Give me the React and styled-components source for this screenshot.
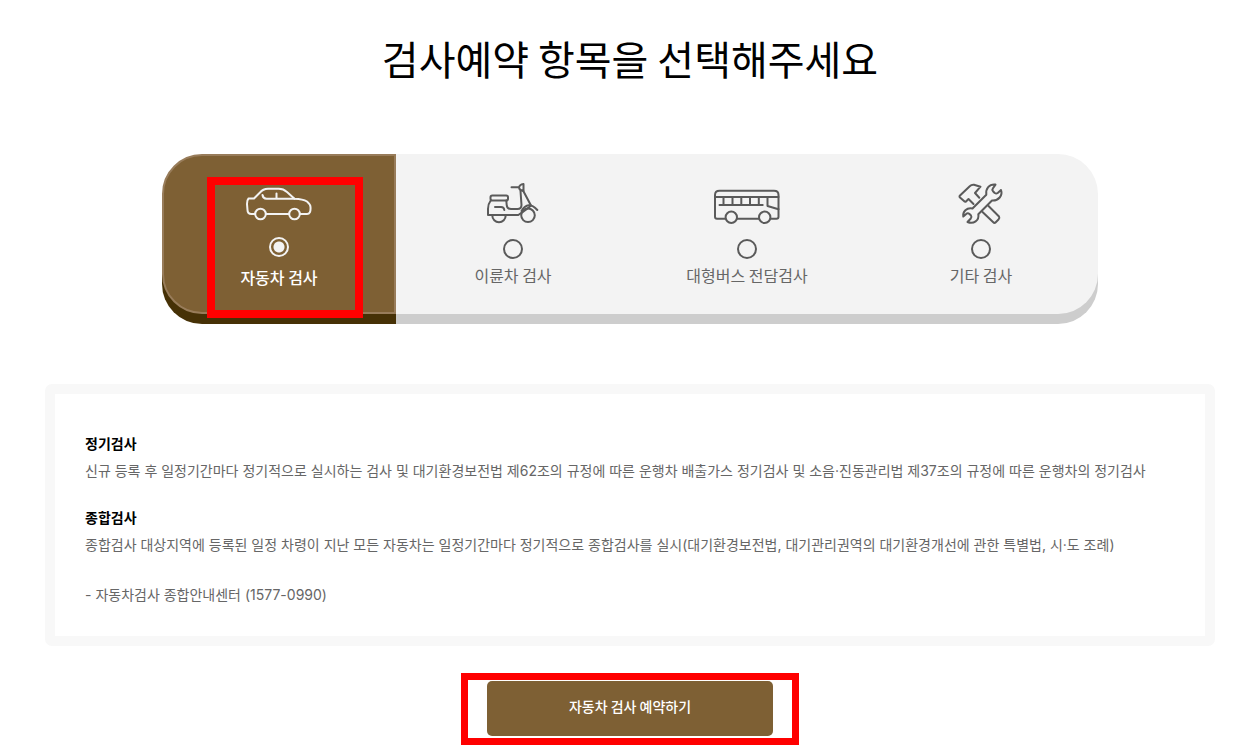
import React, { useState } from "react";
import styled, { createGlobalStyle, css } from "styled-components";

const GlobalStyle = createGlobalStyle`
  *, *::before, *::after { box-sizing: border-box; }
  body {
    margin: 0;
    background: #fff;
    color: #000;
    font-family: "Noto Sans CJK KR", "Noto Sans", sans-serif;
  }
`;

const Page = styled.main`
  padding: 28px 36px 17px 45px;
`;

const Title = styled.h1`
  margin: 0 0 66px;
  font-size: 40px;
  line-height: 60px;
  font-weight: 400;
  text-align: center;
`;

const Tabs = styled.div`
  display: grid;
  grid-template-columns: repeat(4, 1fr);
  width: 80%;
  margin: 0 auto 70px;
`;

const Tab = styled.label`
  position: relative;
  display: flex;
  flex-direction: column;
  align-items: center;
  gap: ${(p) => (p.$active ? 8 : 4)}px;
  height: 160px;
  padding-top: ${(p) => (p.$active ? 22 : 26)}px;
  background: ${(p) => (p.$active ? "#7e6034" : "#f3f3f3")};
  color: ${(p) => (p.$active ? "#fff" : "#666")};
  box-shadow: 0 10px 0 ${(p) => (p.$active ? "#463106" : "#cdcdcd")};
  font-size: 16px;
  font-weight: ${(p) => (p.$active ? 500 : 400)};
  line-height: 24px;
  cursor: pointer;
  ${(p) => p.$active && css`border: 2px solid #987c5a;`}
  &:first-child { border-radius: 40px 0 0 40px; }
  &:last-child { border-radius: 0 40px 40px 0; }
`;

const TabMark = styled.span`
  display: flex;
  flex-direction: column;
  align-items: center;
  gap: 11px;
`;

const Icon = styled.svg`
  display: block;
  height: 48px;
  fill: none;
  stroke: ${(p) => (p.$active ? "#f3f3f3" : "#5a5a5a")};
  stroke-width: 2;
  stroke-linecap: round;
  stroke-linejoin: round;
`;

const Radio = styled.input`
  appearance: none;
  width: 20px;
  height: 20px;
  margin: 0;
  border: 2px solid #5a5a5a;
  border-radius: 50%;
  &:checked {
    border-color: #f3f3f3;
    background: radial-gradient(circle, #f3f3f3 5px, transparent 6px);
  }
`;

const Highlight = styled.span`
  position: absolute;
  inset: ${(p) => p.$inset};
  border: ${(p) => p.$thickness}px solid #f00;
  pointer-events: none;
`;

const Notice = styled.section`
  margin-bottom: 35px;
  padding: 36px 30px 28px;
  border: 10px solid #f8f8f8;
  border-radius: 7px;
  font-family: Inter, "Noto Sans CJK KR", sans-serif;
  font-size: 14px;
  line-height: 27px;
`;

const NoticeTitle = styled.h2`
  margin: 0;
  font-size: 14px;
  line-height: 27px;
  font-weight: 700;
`;

const NoticeText = styled.p`
  margin: 0 0 ${(p) => p.$space || 0}px;
  color: #666;
`;

const Action = styled.div`
  position: relative;
  width: 286px;
  margin: 0 auto;
`;

const ReserveButton = styled.button`
  display: block;
  width: 100%;
  height: 55px;
  padding: 0 0 5px;
  border: 0;
  border-radius: 5px;
  background: #7e6034;
  color: #fff;
  font: 500 14px/24px "Noto Sans CJK KR", "Noto Sans", sans-serif;
  cursor: pointer;
`;

const drawings = {
  car: {
    width: 66,
    shape: (
      <g transform="translate(0 9)">
        <path d="M9 27H5.500Q1.500 27 1.500 23L1 17Q1 13 2.500 11.500H8L14 5.500Q17 2 22 1.800H32Q37 1.500 41 5L48.500 11.700Q57 12 61 14.500Q64.500 17.500 64.500 20Q65 27 61 27H54M20 27H43" />
        <circle cx="14.500" cy="27" r="5.300" />
        <circle cx="48.500" cy="27" r="5.300" />
        <path d="M16.500 8Q17 11.500 20.500 11.700H48.500M30.500 6.500V11.500" />
      </g>
    ),
  },
  scooter: {
    width: 56,
    shape: (
      <>
        <path d="M26.500 7.300H34M38.500 4V11Q34.500 10.500 34 7.500Q34.500 4.500 38.500 4Z" />
        <path d="M35.500 11L36.500 25Q36.500 29 32.500 29H26Q22 29 21.700 25L21.300 20.500" />
        <path d="M38.300 11L46 25.500Q43 28.500 33.300 35H3V29Q3 24 5.700 20.500" />
        <rect x="5.500" y="15.500" width="17.500" height="5" rx="1.800" />
        <path d="M10 27H16Q19 27 19.300 30M36.500 31Q43 20 52.300 30" />
        <path d="M7.300 35.500A6.700 6.700 0 0 0 20.700 35.500" />
        <circle cx="43" cy="35.300" r="6.800" />
      </>
    ),
  },
  bus: {
    width: 66,
    shape: (
      <>
        <path d="M11.500 38.700H3Q1 38.700 1 36.700V15Q1 10.700 5.500 10.700H60Q64.500 10.700 64.500 15V36.700Q64.500 38.700 62.500 38.700H56.500M23.200 38.700H44.800" />
        <path d="M1 17H64.500M5.500 25H48.700M9.500 17V25M18.500 17V25M27.300 17V25M36 17V25M44.800 17V25M53.500 17V26L64.500 29.300" />
        <circle cx="17.300" cy="37.300" r="5.700" />
        <circle cx="50.700" cy="37.300" r="5.700" />
      </>
    ),
  },
  tools: {
    width: 48,
    shape: (
      <>
        <path d="M16.500 24L11.500 19L9 21.500Q8 22 7 21L3 17.500Q2 16.500 3 15.500L13 6Q14.500 4.500 17 4.800L23.500 6.700L18 13L22.300 17.700" />
        <path d="M31.500 26L42 36.500Q43 38 41.500 39.500L38.500 42.500Q37.500 43.500 36 42L25.500 32" />
        <path d="M38.500 4.600C32 4 28.500 8.500 29.300 14.700L15.500 28.500C9.500 27.500 5.500 31.500 6.300 36.500L9.500 33.700Q11 32.800 12.500 34L14 35.500Q15 37 13.800 38.500L10.500 42C16.500 44.500 22.500 40.500 21.300 34.300L35 20.500C41.500 21 46 15.500 44 10L40.700 13Q39.200 14 37.700 13L36 11.200Q34.800 9.700 36 8.200Z" />
      </>
    ),
  },
};

const items = [
  { id: "car", label: "자동차 검사" },
  { id: "scooter", label: "이륜차 검사" },
  { id: "bus", label: "대형버스 전담검사" },
  { id: "tools", label: "기타 검사" },
];

export default function App() {
  const [selected, setSelected] = useState("car");
  return (
    <>
      <GlobalStyle />
      <Page>
        <Title>검사예약 항목을 선택해주세요</Title>
        <Tabs role="radiogroup" aria-label="검사예약 항목">
          {items.map(({ id, label }) => {
            const active = selected === id;
            const { width, shape } = drawings[id];
            return (
              <Tab key={id} $active={active}>
                <TabMark>
                  <Icon $active={active} width={width} viewBox={`0 0 ${width} 48`} aria-hidden="true">
                    {shape}
                  </Icon>
                  <Radio type="radio" name="inspection" checked={active} onChange={() => setSelected(id)} />
                </TabMark>
                {label}
                {id === "car" && <Highlight $inset="21px 31px -6px 43px" $thickness={8} />}
              </Tab>
            );
          })}
        </Tabs>
        <Notice>
          <NoticeTitle>정기검사</NoticeTitle>
          <NoticeText $space={20}>
            신규 등록 후 일정기간마다 정기적으로 실시하는 검사 및 대기환경보전법 제62조의 규정에 따른 운행차 배출가스 정기검사 및 소음·진동관리법 제37조의 규정에 따른 운행차의 정기검사
          </NoticeText>
          <NoticeTitle>종합검사</NoticeTitle>
          <NoticeText $space={23}>
            종합검사 대상지역에 등록된 일정 차령이 지난 모든 자동차는 일정기간마다 정기적으로 종합검사를 실시(대기환경보전법, 대기관리권역의 대기환경개선에 관한 특별법, 시·도 조례)
          </NoticeText>
          <NoticeText>- 자동차검사 종합안내센터 (1577-0990)</NoticeText>
        </Notice>
        <Action>
          <ReserveButton type="button">자동차 검사 예약하기</ReserveButton>
          <Highlight $inset="-8px -26px -9px -26px" $thickness={7} />
        </Action>
      </Page>
    </>
  );
}
